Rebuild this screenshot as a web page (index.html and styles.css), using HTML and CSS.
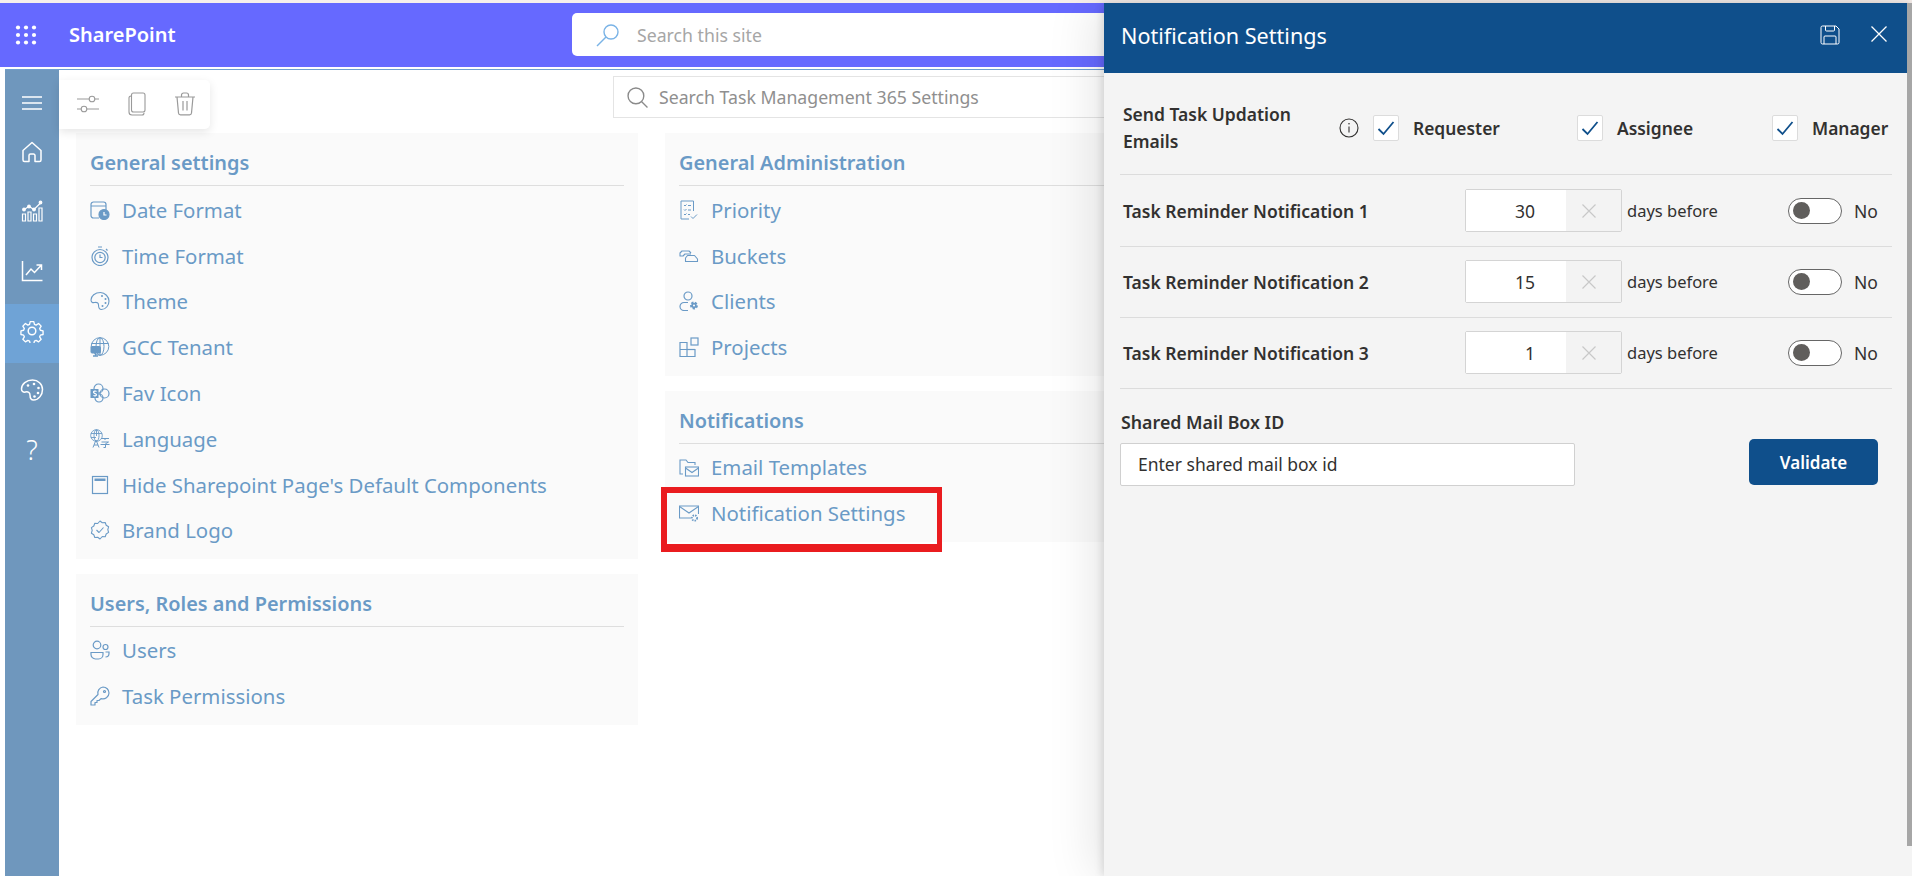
FILE: index.html
```html
<!DOCTYPE html>
<html lang="en">
<head>
    <meta charset="UTF-8">
    <meta name="viewport" content="width=device-width, initial-scale=1.0">
    <title>Notification Settings</title>
    <link rel="stylesheet" href="styles.css">
</head>
<body>

    <header class="topbar">
        <svg class="waffle" width="22" height="20" viewBox="0 0 22 20" fill="#fff">
            <circle cx="3" cy="2.5" r="2.1"/><circle cx="11" cy="2.5" r="2.1"/><circle cx="19" cy="2.5" r="2.1"/>
            <circle cx="3" cy="10" r="2.1"/><circle cx="11" cy="10" r="2.1"/><circle cx="19" cy="10" r="2.1"/>
            <circle cx="3" cy="17.5" r="2.1"/><circle cx="11" cy="17.5" r="2.1"/><circle cx="19" cy="17.5" r="2.1"/>
        </svg>
        <span class="brand">SharePoint</span>
        <div class="site-search">
            <svg width="24" height="24" viewBox="0 0 24 24" fill="none" stroke="#7ab3e6" stroke-width="1.4">
                <circle cx="15" cy="9" r="7"/><path d="M10 14 1 23"/>
            </svg>
            <span>Search this site</span>
        </div>
    </header>

    <div class="page">
        <nav class="sidebar">
            <div class="side-menu">
                <svg width="22" height="16" viewBox="0 0 22 16" stroke="#fff" stroke-width="1.3"><path d="M1 2h20M1 8h20M1 14h20"/></svg>
            </div>
            <div class="side-item">
                <svg width="22" height="22" viewBox="0 0 22 22" fill="none" stroke="#fff" stroke-width="1.5" stroke-linejoin="round"><path d="M2 9.5 11 1.5l9 8V19a1.5 1.5 0 0 1-1.5 1.5H14v-6a1.5 1.5 0 0 0-1.5-1.5h-3A1.5 1.5 0 0 0 8 14.5v6H3.500A1.500 1.500 0 0 1 2 19z"/></svg>
            </div>
            <div class="side-item">
                <svg width="22" height="22" viewBox="0 0 22 22" fill="none" stroke="#fff" stroke-width="1.200"><path d="M1.500 21v-7h3v7zM7 21v-9h3v9zM12.500 21v-7h3v7zM18 21V8h3v13z"/><path d="M3 9.500l5-3 5 3 6-6"/><circle cx="3" cy="9.500" r="1.300" fill="#fff"/><circle cx="8" cy="6.500" r="1.300" fill="#fff"/><circle cx="13" cy="9.500" r="1.300" fill="#fff"/><circle cx="19.500" cy="2.500" r="1.300" fill="#fff"/></svg>
            </div>
            <div class="side-item">
                <svg width="22" height="22" viewBox="0 0 22 22" fill="none" stroke="#fff" stroke-width="1.500"><path d="M1.500 1v19.500h20"/><path d="M5 15l5-6 3.500 3.500L20 5.500M15.500 5H20.500v5"/></svg>
            </div>
            <div class="side-item side-active">
                <svg width="24" height="24" viewBox="0 0 24 24" fill="none" stroke="#fff" stroke-width="1.500" stroke-linejoin="round"><path d="M10 1.500h4l.7 3.100 1.900.8 2.700-1.700 2.900 2.900-1.700 2.700.8 1.900 3 .7v4l-3 .7-.8 1.900 1.700 2.700-2.900 2.900-2.700-1.700-1.900.8-.7 3h-4l-.7-3-1.900-.8-2.700 1.700-2.900-2.900 1.700-2.700-.8-1.900-3-.7v-4l3-.7.8-1.900-1.700-2.700 2.900-2.900 2.700 1.700 1.900-.8z" transform="translate(1.200 1.200) scale(.9)"/><circle cx="12" cy="12" r="3.800"/></svg>
            </div>
            <div class="side-item">
                <svg width="24" height="24" viewBox="0 0 24 24" fill="none" stroke="#fff" stroke-width="1.500"><path d="M12.500 2C6.500 2 1.500 6 1.500 11c0 2.500 2 3.500 4 3 2.500-.6 4.500.5 4.500 3 0 1.800.2 5 3.500 5 5.500 0 9-5.500 9-10.500C22.500 6 18 2 12.500 2z"/><g fill="#fff" stroke="none"><circle cx="8" cy="7.500" r="1.300"/><circle cx="14" cy="6" r="1.300"/><circle cx="18.500" cy="10" r="1.300"/><circle cx="18" cy="15" r="1.300"/><circle cx="14.500" cy="18.500" r="1.300"/></g></svg>
            </div>
            <div class="side-item side-help">?</div>
        </nav>

        <main class="content">
            <div class="toolbar">
                <svg width="22" height="20" viewBox="0 0 22 20" fill="none" stroke="#9a9a9a" stroke-width="1.100"><path d="M0 5h12M18 5h4M0 15h4M10 15h12"/><circle cx="15" cy="5" r="2.800"/><circle cx="7" cy="15" r="2.800"/></svg>
                <svg width="18" height="24" viewBox="0 0 18 24" fill="none" stroke="#9a9a9a" stroke-width="1.100"><rect x="3.500" y="1" width="13.500" height="19" rx="2"/><path d="M3.500 4H3A2 2 0 0 0 1 6v14a3 3 0 0 0 3 3h10a2 2 0 0 0 2-2"/></svg>
                <svg width="22" height="24" viewBox="0 0 22 24" fill="none" stroke="#9a9a9a" stroke-width="1.200"><path d="M1 5h20M7.500 5V3a2 2 0 0 1 2-2h3a2 2 0 0 1 2 2v2M3 5l1.500 16a2 2 0 0 0 2 1.800h9a2 2 0 0 0 2-1.800L19 5M9 9v9.500M13 9v9.500"/></svg>
            </div>

            <div class="settings-search">
                <svg width="21" height="21" viewBox="0 0 20 20" fill="none" stroke="#8a8a8a" stroke-width="1.300"><circle cx="8.500" cy="8.500" r="7.500"/><path d="M14 14l5.500 5.500"/></svg>
                <span>Search Task Management 365 Settings</span>
            </div>

            <div class="columns">
                <div class="column">
                    <section class="card">
                        <h3>General settings</h3>
                        <ul class="links">
                            <li>
                                <svg width="20" height="20" viewBox="0 0 20 20" fill="none" stroke="#6a9ac6" stroke-width="1.200"><path d="M9 18H3.500A2.500 2.500 0 0 1 1 15.500v-11A2.500 2.500 0 0 1 3.500 2h10A2.500 2.500 0 0 1 16 4.500V10M1 6h15"/><circle cx="14" cy="14.500" r="5" fill="#6a9ac6"/><path d="M14 12v3h2.500" stroke="#fff"/></svg>
                                Date Format
                            </li>
                            <li>
                                <svg width="20" height="20" viewBox="0 0 20 20" fill="none" stroke="#6a9ac6" stroke-width="1.200"><circle cx="10" cy="11.500" r="8"/><circle cx="10" cy="11.500" r="5.200"/><path d="M10 8.500v3h2.500M8 1h4M16 3l1.500 1.500"/></svg>
                                Time Format
                            </li>
                            <li>
                                <svg width="20" height="20" viewBox="0 0 20 20" fill="none" stroke="#6a9ac6" stroke-width="1.100"><path d="M10.500 1.500C5 1.500 1 5 1 9c0 2 1.500 3 3.500 2.500 2.500-.5 4 .5 4 2.500 0 1.800.3 4.500 3 4.500 4.500 0 7.500-4.500 7.500-8.500S15 1.500 10.500 1.500z"/><g fill="#6a9ac6" stroke="none"><circle cx="12" cy="5" r="1"/><circle cx="15.500" cy="8" r="1"/><circle cx="15.500" cy="12" r="1"/><circle cx="12.500" cy="15" r="1"/></g></svg>
                                Theme
                            </li>
                            <li>
                                <svg width="20" height="20" viewBox="0 0 20 20" fill="none" stroke="#6a9ac6" stroke-width="1"><circle cx="10" cy="9.500" r="8.800"/><ellipse cx="10" cy="9.500" rx="4" ry="8.800"/><path d="M1.500 6.500h17M10 1v17"/><rect x="1" y="9.500" width="9.500" height="6.500" rx="1" fill="#6a9ac6"/><path d="M5.500 16v2.500M3 19h5" stroke-width="1.400"/></svg>
                                GCC Tenant
                            </li>
                            <li>
                                <svg width="20" height="20" viewBox="0 0 20 20" fill="none" stroke="#6a9ac6" stroke-width="1.200"><circle cx="8.500" cy="5.500" r="4.500"/><circle cx="14.500" cy="10.500" r="4.500"/><circle cx="9" cy="15" r="4"/><rect x="0.500" y="6" width="8" height="9" fill="#6a9ac6" stroke="none"/><path d="M6.500 8.500c-1-.8-3-.6-3 .8 0 1.600 3 1 3 2.500 0 1.200-2 1.400-3 .6" stroke="#fff"/></svg>
                                Fav Icon
                            </li>
                            <li>
                                <svg width="20" height="20" viewBox="0 0 20 20" fill="none" stroke="#6a9ac6" stroke-width=".9"><circle cx="6.500" cy="6.500" r="5.800"/><ellipse cx="6.500" cy="6.500" rx="2.500" ry="5.800"/><path d="M1 4.500h11M1 8.500h5M6.500 1v6"/><path d="M3 18.500l3-7.500 3 7.500M4 16h4M11 9.500h8M15 9.500v1.500M11.500 13h7l-3 1.800v3.700h-2M10.500 15.500h9" stroke-width="1"/></svg>
                                Language
                            </li>
                            <li>
                                <svg width="20" height="20" viewBox="0 0 20 20" fill="none" stroke="#6a9ac6" stroke-width="1.200"><rect x="2.500" y="1.500" width="15" height="17"/><rect x="4.500" y="3.500" width="11" height="2.500" fill="#6a9ac6" stroke="none"/></svg>
                                Hide Sharepoint Page's Default Components
                            </li>
                            <li>
                                <svg width="20" height="20" viewBox="0 0 20 20" fill="none" stroke="#6a9ac6" stroke-width="1.100" stroke-linejoin="round"><path d="M10 1l2.300 1.700 2.900-.2 1 2.700 2.400 1.600-.8 2.800.8 2.800-2.400 1.600-1 2.700-2.900-.2L10 19l-2.300-1.700-2.900.2-1-2.700-2.400-1.600.8-2.800-.8-2.800 2.400-1.600 1-2.700 2.900.2z"/><path d="M6.500 10l2.500 2.500 4.500-5"/></svg>
                                Brand Logo
                            </li>
                        </ul>
                    </section>
                    <section class="card">
                        <h3>Users, Roles and Permissions</h3>
                        <ul class="links">
                            <li>
                                <svg width="20" height="20" viewBox="0 0 20 20" fill="none" stroke="#6a9ac6" stroke-width="1.200"><circle cx="7" cy="5" r="3.800"/><circle cx="15.500" cy="7" r="2.500"/><path d="M1 12.500h12v2a4.500 4.500 0 0 1-4.500 4.500h-3A4.500 4.500 0 0 1 1 14.500zM15.500 12h3.500v1.500A3.500 3.500 0 0 1 15.500 17"/></svg>
                                Users
                            </li>
                            <li>
                                <svg width="20" height="20" viewBox="0 0 20 20" fill="none" stroke="#6a9ac6" stroke-width="1.200" stroke-linejoin="round"><path d="M13 1a6 6 0 0 1 6 6 6 6 0 0 1-8 5.600L9 14.500H7v2H5v2.500H1v-3.500l7-7A6 6 0 0 1 13 1z"/><circle cx="14.500" cy="5.500" r="1"/></svg>
                                Task Permissions
                            </li>
                        </ul>
                    </section>
                </div>

                <div class="column">
                    <section class="card">
                        <h3>General Administration</h3>
                        <ul class="links">
                            <li>
                                <svg width="20" height="20" viewBox="0 0 20 20" fill="none" stroke="#6a9ac6" stroke-width="1"><path d="M14.500 11V1h-12.500v18h8"/><path d="M5 5l1 1 1.500-1.500M5 9.500l1 1 1.500-1.500M5 14l1 1 1.500-1.500M9 5.500h3M9 10h3M9 14.500h2M12 16.500l2 2 4-4"/></svg>
                                Priority
                            </li>
                            <li>
                                <svg width="20" height="20" viewBox="0 0 20 20" fill="none" stroke="#6a9ac6" stroke-width="1.100" stroke-linejoin="round"><path d="M4 10H1V7l2-2h7l2 2M6.500 15.500V12l2-2.500h7l3 3.500v2.500zM4 10l2-2h6"/></svg>
                                Buckets
                            </li>
                            <li>
                                <svg width="20" height="20" viewBox="0 0 20 20" fill="none" stroke="#6a9ac6" stroke-width="1.200"><circle cx="9" cy="5" r="4"/><path d="M9 11.500H5a4 4 0 0 0 0 8h4"/><circle cx="15" cy="14.500" r="2.700" fill="#6a9ac6" stroke-width="2.500" stroke-dasharray="2 1.300"/><circle cx="15" cy="14.500" r="1" fill="#fff" stroke="none"/></svg>
                                Clients
                            </li>
                            <li>
                                <svg width="20" height="20" viewBox="0 0 20 20" fill="none" stroke="#6a9ac6" stroke-width="1.200"><path d="M1 5.500h7v14H1zM1 12.500h15v7H8"/><rect x="12" y="1" width="7" height="7"/><path d="M8 12.500h8"/></svg>
                                Projects
                            </li>
                        </ul>
                    </section>
                    <section class="card">
                        <h3 class="tall">Notifications</h3>
                        <ul class="links">
                            <li>
                                <svg width="20" height="20" viewBox="0 0 20 20" fill="none" stroke="#6a9ac6" stroke-width="1.100"><path d="M4 17H1V3h6l2 2.500h7V8"/><rect x="6.500" y="10" width="13" height="9"/><path d="M6.500 11l6.500 4.500 6.500-4.500"/></svg>
                                Email Templates
                            </li>
                            <li class="marked">
                                <svg width="20" height="20" viewBox="0 0 20 20" fill="none" stroke="#6a9ac6" stroke-width="1.100"><path d="M12 15H.5V3h19v8"/><path d="M.5 3.500L10 10l9.500-6.500"/><circle cx="15.500" cy="15" r="2.600" stroke-width="1.800" stroke-dasharray="1.500 1"/></svg>
                                Notification Settings
                                <span class="red-box"></span>
                            </li>
                        </ul>
                    </section>
                </div>
            </div>
        </main>
    </div>

    <aside class="panel">
        <div class="panel-head">
            <h2>Notification Settings</h2>
            <svg class="save" width="20" height="20" viewBox="0 0 20 20" fill="none" stroke="#fff" stroke-width="1"><path d="M2.500 1H16l3 3v13.500a1.500 1.500 0 0 1-1.500 1.500h-15A1.500 1.500 0 0 1 1 17.500v-15A1.500 1.500 0 0 1 2.500 1z"/><path d="M5.500 1v4a1 1 0 0 0 1 1h7a1 1 0 0 0 1-1V1M4 19v-7a1 1 0 0 1 1-1h10a1 1 0 0 1 1 1v7"/></svg>
            <svg class="close" width="16" height="16" viewBox="0 0 16 16" stroke="#fff" stroke-width="1.300"><path d="M.5.500l15 15M15.500.500l-15 15"/></svg>
        </div>
        <div class="panel-body">
            <div class="row row-emails">
                <div class="row-label emails-label">Send Task Updation Emails</div>
                <svg class="info" width="20" height="20" viewBox="0 0 20 20" fill="none" stroke="#323130" stroke-width="1.100"><circle cx="10" cy="10" r="9"/><path d="M10 8.500v6"/><circle cx="10" cy="5.800" r=".8" fill="#323130" stroke="none"/></svg>
                <label class="check w-204"><span class="box"><svg width="18" height="16" viewBox="0 0 18 16" fill="none" stroke="#0f4f8b" stroke-width="1.800"><path d="M1.500 9l5 5L16.500 2"/></svg></span>Requester</label>
                <label class="check w-195"><span class="box"><svg width="18" height="16" viewBox="0 0 18 16" fill="none" stroke="#0f4f8b" stroke-width="1.800"><path d="M1.500 9l5 5L16.500 2"/></svg></span>Assignee</label>
                <label class="check"><span class="box"><svg width="18" height="16" viewBox="0 0 18 16" fill="none" stroke="#0f4f8b" stroke-width="1.800"><path d="M1.500 9l5 5L16.500 2"/></svg></span>Manager</label>
            </div>
            <div class="row">
                <div class="row-label">Task Reminder Notification 1</div>
                <div class="days"><input type="text" value="30"><span class="clear"><svg width="14" height="14" viewBox="0 0 14 14" stroke="#c8c8c8" stroke-width="1.200"><path d="M.5.500l13 13M13.500.500l-13 13"/></svg></span></div>
                <span class="days-text">days before</span>
                <span class="toggle"><span class="knob"></span></span>
                <span class="toggle-text">No</span>
            </div>
            <div class="row">
                <div class="row-label">Task Reminder Notification 2</div>
                <div class="days"><input type="text" value="15"><span class="clear"><svg width="14" height="14" viewBox="0 0 14 14" stroke="#c8c8c8" stroke-width="1.200"><path d="M.5.500l13 13M13.500.500l-13 13"/></svg></span></div>
                <span class="days-text">days before</span>
                <span class="toggle"><span class="knob"></span></span>
                <span class="toggle-text">No</span>
            </div>
            <div class="row">
                <div class="row-label">Task Reminder Notification 3</div>
                <div class="days"><input type="text" value="1"><span class="clear"><svg width="14" height="14" viewBox="0 0 14 14" stroke="#c8c8c8" stroke-width="1.200"><path d="M.5.500l13 13M13.500.500l-13 13"/></svg></span></div>
                <span class="days-text">days before</span>
                <span class="toggle"><span class="knob"></span></span>
                <span class="toggle-text">No</span>
            </div>
            <div class="mailbox">
                <div class="mailbox-field">
                    <label class="mailbox-label">Shared Mail Box ID</label>
                    <input class="mailbox-input" type="text" placeholder="Enter shared mail box id">
                </div>
                <button class="validate" type="button">Validate</button>
            </div>
        </div>
        <div class="scrollbar"></div>
    </aside>

</body>
</html>
```

FILE: styles.css
```css
* { box-sizing: border-box; }
html, body { height: 100%; }
body { margin: 0; padding-top: 3px; background: #fff; font-family: "Noto Sans", "Open Sans", Arial, sans-serif; overflow: hidden; position: relative; }
body::before { content: ""; position: absolute; top: 0; left: 0; right: 0; height: 3px; background: #f7efec; }

/* top bar */
.topbar { height: 64px; background: #6669ff; display: flex; align-items: flex-start; color: #fff; }
.waffle { margin: 22px 0 0 15px; }
.brand { margin: 18px 0 0 32px; width: 503px; font-size: 20px; font-weight: 600; line-height: 28px; }
.site-search { width: 700px; height: 43px; margin-top: 10px; background: #fff; border-radius: 5px; display: flex; align-items: center; padding-left: 24px; color: #a6a6a6; font-size: 17.7px; }
.site-search span { margin-left: 17px; }

/* page under the bar */
.page { display: flex; height: 809px; margin-top: 2px; padding-left: 5px; }
.sidebar { width: 54px; flex: none; background: #6f97bd; border-top: 1px solid #6f9fd0; }
.side-menu { height: 55px; padding-top: 11px; display: flex; align-items: center; justify-content: center; }
.side-item { height: 59.6px; padding-bottom: 6px; display: flex; align-items: center; justify-content: center; color: #fff; }
.side-active { background: #6fa3d6; }
.side-help { font-size: 27px; font-weight: 300; }

.content { flex: 1; position: relative; padding: 6px 0 0 17px; border-top: 1px solid #6f9fd0; min-width: 0; }
.toolbar { position: absolute; left: 0; top: 10px; width: 151px; height: 49px; background: #fff; border-radius: 0 5px 5px 0; box-shadow: 0 3px 10px rgba(0, 0, 0, .1); display: flex; align-items: center; gap: 28.5px; padding: 0 0 2px 18px; z-index: 2; }
.settings-search { width: 640px; height: 42px; margin-left: 537px; border: 1px solid #e4e4e4; display: flex; align-items: center; padding-left: 13px; color: #8f8f8f; font-size: 17.7px; }
.settings-search span { margin-left: 11px; }

.columns { display: flex; gap: 27px; margin-top: 15px; }
.column { width: 562px; flex: none; display: flex; flex-direction: column; gap: 15px; }
.card { background: #fafafa; padding: 0 14px 6px; position: relative; }
.card h3 { margin: 0; height: 53px; padding-top: 16px; border-bottom: 1px solid #dedede; color: #6a9ac6; font-size: 19.9px; font-weight: 600; line-height: 27px; }
.links { list-style: none; margin: 1px 0 0; padding: 0; }
.card + .card .links { margin-top: 0; }
.links li { height: 45.8px; display: flex; align-items: center; gap: 12px; color: #6a9ac6; font-size: 20.4px; position: relative; white-space: nowrap; }
.links svg { flex: none; }
.red-box { position: absolute; left: -18px; top: -3px; width: 281px; height: 65px; border: solid #ea1c1f; border-width: 6px 5px 8px 6px; }

/* slide-in panel */
.panel { position: absolute; top: 3px; left: 1104px; right: 0; bottom: 0; background: #f4f4f4; box-shadow: -2px 0 8px rgba(0, 0, 0, .12), -10px 0 45px rgba(0, 0, 0, .1); display: flex; flex-direction: column; }
.panel-head { height: 70px; flex: none; background: #0f4f8b; margin-right: 5px; display: flex; align-items: center; padding: 0 20px 0 17px; color: #fff; }
.panel-head h2 { margin: 0 0 5px; flex: 1; font-size: 21.6px; font-weight: 400; }
.save { margin: -6px 0 0 0; }
.close { margin: -8px 0 0 31px; }
.scrollbar { position: absolute; top: 0; right: 0; width: 5px; height: 843px; background: #a6a6a6; }

.panel-body { padding: 7px 15px 0 16px; margin-right: 5px; color: #323130; }
.row { height: 71px; padding: 13px 0 14px 3px; border-bottom: 1px solid #dcdcdc; display: flex; align-items: center; font-size: 17.5px; }
.row-emails { height: 95px; padding: 2px 0 0 3px; margin-bottom: 1px; }
.row-label { width: 342px; font-weight: 600; font-size: 17.5px; }
.emails-label { width: 216px; padding-right: 30px; line-height: 27px; }
.info { margin-right: 14px; }

.check { display: flex; align-items: center; gap: 14px; font-size: 17.4px; font-weight: 600; }
.w-204 { width: 204px; }
.w-195 { width: 195px; }
.box { width: 26px; height: 26px; background: #fff; border: 1px solid #dcdcdc; border-radius: 2px; display: flex; align-items: center; justify-content: center; }

.days { width: 157px; height: 43px; display: flex; border: 1px solid #d4d4d4; border-radius: 2px; }
.days input { width: 100px; border: 0; outline: 0; padding: 0 31px 0 0; background: #fff; text-align: right; font: inherit; font-size: 17.5px; color: #323130; }
.clear { flex: 1; display: flex; align-items: center; justify-content: center; padding-right: 10px; background: #f3f3f3; }
.days-text { width: 166px; padding-left: 5px; font-size: 16.500px; }
.toggle { width: 54px; height: 26px; border: 1px solid #666; border-radius: 13px; background: #fff; display: flex; align-items: center; padding-left: 4px; }
.knob { width: 17px; height: 17px; border-radius: 50%; background: #605e5c; }
.toggle-text { margin-left: 12px; font-size: 17.5px; }

.mailbox { display: flex; align-items: flex-end; justify-content: space-between; margin-top: 21px; padding-right: 14px; }
.mailbox-field { width: 455px; }
.mailbox-label { display: block; height: 33px; padding-left: 1px; font-size: 17.8px; font-weight: 600; line-height: 25px; }
.mailbox-input { display: block; width: 100%; height: 43px; border: 1px solid #d0d0d0; border-radius: 2px; padding: 0 17px 2px; outline: 0; background: #fff; font: inherit; font-size: 17.5px; }
.mailbox-input::placeholder { color: #323130; opacity: 1; }
.validate { width: 129px; height: 46px; margin-bottom: 1px; border: 0; border-radius: 5px; background: #0f4f8b; color: #fff; font: inherit; font-size: 17px; font-weight: 600; }
```
